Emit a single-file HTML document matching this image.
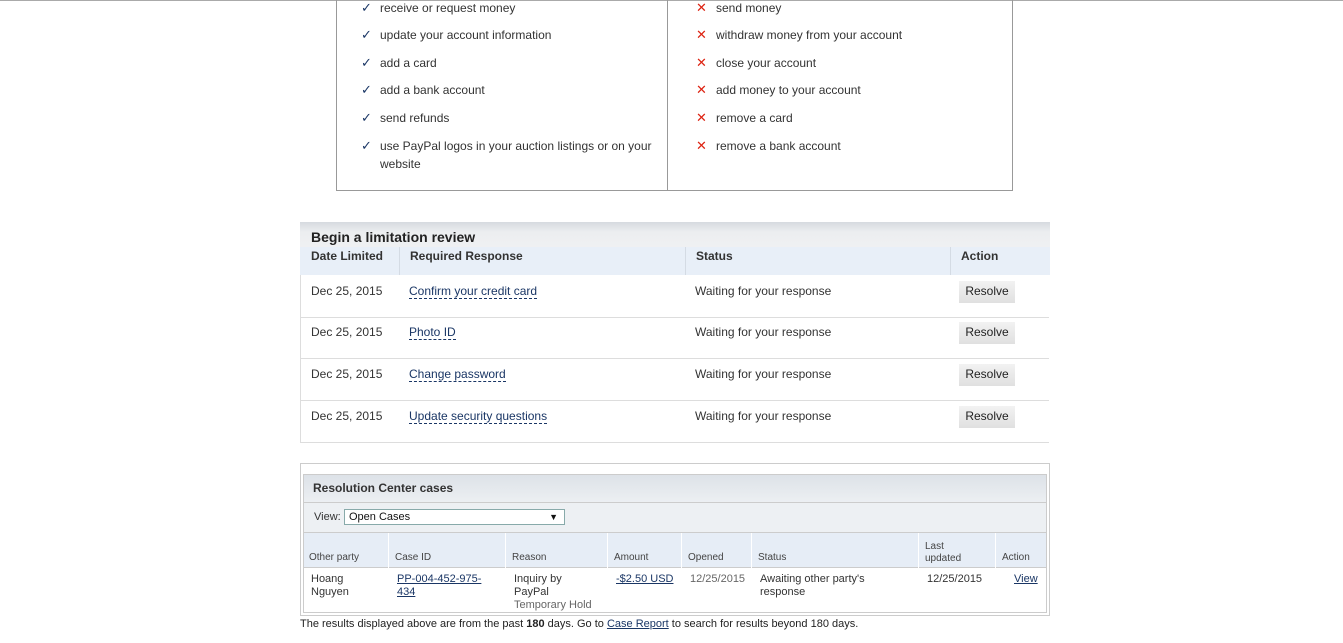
<!DOCTYPE html>
<html><head><meta charset="utf-8"><style>
*{margin:0;padding:0;box-sizing:border-box}
body{width:1343px;height:643px;background:#fff;font-family:"Liberation Sans",Arial,sans-serif;color:#333;font-size:12px;position:relative;overflow:hidden}
.a{position:absolute;white-space:nowrap}
.ck{color:#1a3665;font-size:13px}
.x{color:#d21;font-size:13px}
.lnk{color:#1a3665;border-bottom:1px dashed #1a3665}
.btn{position:absolute;left:959px;width:56px;height:22px;background:linear-gradient(#f2f2f2,#e0e0e0);color:#222;font-size:12px;text-align:center;line-height:21px}
.hr{position:absolute;left:301px;width:748px;height:1px;background:#ddd}
.u{color:#1a3665;text-decoration:underline}
.s{font-size:10px;color:#444}
</style></head><body>
<div style="position:absolute;left:0;top:0;width:1343px;height:1px;background:#aaa"></div>
<div style="position:absolute;left:336px;top:0;width:677px;height:191px;border:1px solid #999;border-top:none"></div>
<div style="position:absolute;left:667px;top:0;width:1px;height:190px;background:#999"></div>

<div class="a ck" style="left:361px;top:0">✓</div><div class="a" style="left:380px;top:1px">receive or request money</div>
<div class="a ck" style="left:361px;top:27px">✓</div><div class="a" style="left:380px;top:28px">update your account information</div>
<div class="a ck" style="left:361px;top:55px">✓</div><div class="a" style="left:380px;top:56px">add a card</div>
<div class="a ck" style="left:361px;top:82px">✓</div><div class="a" style="left:380px;top:83px">add a bank account</div>
<div class="a ck" style="left:361px;top:110px">✓</div><div class="a" style="left:380px;top:111px">send refunds</div>
<div class="a ck" style="left:361px;top:138px">✓</div><div class="a" style="left:380px;top:137px;line-height:18px;white-space:normal;width:285px">use PayPal logos in your auction listings or on your website</div>

<div class="a x" style="left:696px;top:0">✕</div><div class="a" style="left:716px;top:1px">send money</div>
<div class="a x" style="left:696px;top:27px">✕</div><div class="a" style="left:716px;top:28px">withdraw money from your account</div>
<div class="a x" style="left:696px;top:55px">✕</div><div class="a" style="left:716px;top:56px">close your account</div>
<div class="a x" style="left:696px;top:82px">✕</div><div class="a" style="left:716px;top:83px">add money to your account</div>
<div class="a x" style="left:696px;top:110px">✕</div><div class="a" style="left:716px;top:111px">remove a card</div>
<div class="a x" style="left:696px;top:138px">✕</div><div class="a" style="left:716px;top:139px">remove a bank account</div>

<div style="position:absolute;left:300px;top:222px;width:750px;height:25px;background:linear-gradient(#d6dadf,#eceef0 40%,#eff0f2)"></div>
<div class="a" style="left:311px;top:229px;font-size:14px;font-weight:bold;color:#222">Begin a limitation review</div>
<div style="position:absolute;left:300px;top:247px;width:750px;height:28px;background:#e8eff8"></div>
<div style="position:absolute;left:399px;top:247px;width:1px;height:28px;background:#d4dbe4"></div>
<div style="position:absolute;left:685px;top:247px;width:1px;height:28px;background:#d4dbe4"></div>
<div style="position:absolute;left:950px;top:247px;width:1px;height:28px;background:#d4dbe4"></div>
<div class="a" style="left:311px;top:249px;font-weight:bold">Date Limited</div>
<div class="a" style="left:410px;top:249px;font-weight:bold">Required Response</div>
<div class="a" style="left:696px;top:249px;font-weight:bold">Status</div>
<div class="a" style="left:961px;top:249px;font-weight:bold">Action</div>
<div style="position:absolute;left:300px;top:275px;width:1px;height:168px;background:#ddd"></div>

<div class="a" style="left:311px;top:284px">Dec 25, 2015</div><div class="a" style="left:409px;top:284px"><span class="lnk">Confirm your credit card</span></div><div class="a" style="left:695px;top:284px">Waiting for your response</div><div class="btn" style="top:281px">Resolve</div>
<div class="hr" style="top:317px"></div>
<div class="a" style="left:311px;top:325px">Dec 25, 2015</div><div class="a" style="left:409px;top:325px"><span class="lnk">Photo ID</span></div><div class="a" style="left:695px;top:325px">Waiting for your response</div><div class="btn" style="top:322px">Resolve</div>
<div class="hr" style="top:358px"></div>
<div class="a" style="left:311px;top:367px">Dec 25, 2015</div><div class="a" style="left:409px;top:367px"><span class="lnk">Change password</span></div><div class="a" style="left:695px;top:367px">Waiting for your response</div><div class="btn" style="top:364px">Resolve</div>
<div class="hr" style="top:400px"></div>
<div class="a" style="left:311px;top:409px">Dec 25, 2015</div><div class="a" style="left:409px;top:409px"><span class="lnk">Update security questions</span></div><div class="a" style="left:695px;top:409px">Waiting for your response</div><div class="btn" style="top:406px">Resolve</div>
<div class="hr" style="top:442px"></div>

<div style="position:absolute;left:300px;top:463px;width:750px;height:153px;border:1px solid #ccc"></div>
<div style="position:absolute;left:303px;top:474px;width:744px;height:139px;border:1px solid #ccc"></div>
<div style="position:absolute;left:304px;top:475px;width:742px;height:27px;background:linear-gradient(#dde2e8,#eceff2)"></div>
<div class="a" style="left:313px;top:481px;font-size:12px;font-weight:bold;color:#333">Resolution Center cases</div>
<div style="position:absolute;left:304px;top:502px;width:742px;height:1px;background:#ccc"></div>
<div style="position:absolute;left:304px;top:503px;width:742px;height:29px;background:#edf0f3"></div>
<div class="a" style="left:314px;top:511px;font-size:11px">View:</div>
<div style="position:absolute;left:344px;top:509px;width:221px;height:16px;border:1px solid #8aa;background:#fff;font-size:11px;padding-left:4px;line-height:14px;color:#111">Open Cases<span style="position:absolute;right:6px;top:0;font-size:9px">▼</span></div>
<div style="position:absolute;left:304px;top:532px;width:742px;height:36px;background:#e6edf6;border-top:1px solid #ccc;border-bottom:1px solid #ccc"></div>
<div style="position:absolute;left:388px;top:533px;width:1px;height:35px;background:#fff"></div>
<div style="position:absolute;left:505px;top:533px;width:1px;height:35px;background:#fff"></div>
<div style="position:absolute;left:607px;top:533px;width:1px;height:35px;background:#fff"></div>
<div style="position:absolute;left:681px;top:533px;width:1px;height:35px;background:#fff"></div>
<div style="position:absolute;left:751px;top:533px;width:1px;height:35px;background:#fff"></div>
<div style="position:absolute;left:918px;top:533px;width:1px;height:35px;background:#fff"></div>
<div style="position:absolute;left:995px;top:533px;width:1px;height:35px;background:#fff"></div>
<div class="a s" style="left:309px;top:552px">Other party</div>
<div class="a s" style="left:395px;top:552px">Case ID</div>
<div class="a s" style="left:512px;top:552px">Reason</div>
<div class="a s" style="left:614px;top:552px">Amount</div>
<div class="a s" style="left:688px;top:552px">Opened</div>
<div class="a s" style="left:758px;top:552px">Status</div>
<div class="a s" style="left:925px;top:541px;line-height:12px">Last<br>updated</div>
<div class="a s" style="left:1002px;top:552px">Action</div>

<div class="a" style="left:311px;top:573px;font-size:11px;line-height:13px">Hoang<br>Nguyen</div>
<div class="a" style="left:397px;top:573px;font-size:11px;line-height:13px"><span class="u">PP-004-452-975-</span><br><span class="u">434</span></div>
<div class="a" style="left:514px;top:573px;font-size:11px;line-height:13px">Inquiry by<br>PayPal<br><span style="color:#666">Temporary Hold</span></div>
<div class="a u" style="left:616px;top:573px;font-size:11px">-$2.50 USD</div>
<div class="a" style="left:690px;top:573px;font-size:11px;color:#666">12/25/2015</div>
<div class="a" style="left:760px;top:573px;font-size:11px;line-height:13px">Awaiting other party's<br>response</div>
<div class="a" style="left:927px;top:573px;font-size:11px">12/25/2015</div>
<div class="a u" style="left:1014px;top:573px;font-size:11px">View</div>

<div class="a" style="left:300px;top:618px;font-size:11px;color:#222">The results displayed above are from the past <b>180</b> days. Go to <span class="u">Case Report</span> to search for results beyond 180 days.</div>
</body></html>
